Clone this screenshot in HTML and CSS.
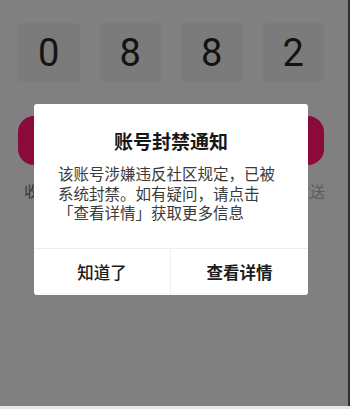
FILE: index.html
```html
<!DOCTYPE html>
<html lang="zh-CN">
<head>
<meta charset="utf-8">
<title>账号封禁通知</title>
<link rel="stylesheet" href="styles.css">
</head>
<body>
<div class="screen">
  <main class="page">
    <div class="code-row">
      <div class="code-box">0</div>
      <div class="code-box">8</div>
      <div class="code-box">8</div>
      <div class="code-box">2</div>
    </div>
    <div class="primary-btn"></div>
    <div class="link-row">
      <span class="link">收不到验证码</span>
      <span class="resend">60秒后重新发送</span>
    </div>

    <div class="dialog" role="dialog">
      <h2 class="dialog-title">账号封禁通知</h2>
      <p class="dialog-body">该账号涉嫌违反社区规定，已被系统封禁。如有疑问，请点击「查看详情」获取更多信息</p>
      <div class="dialog-actions">
        <button class="action action-secondary">知道了</button>
        <button class="action action-primary">查看详情</button>
      </div>
    </div>
  </main>
  <div class="edge-right"></div>
</div>
<div class="edge-bottom"></div>
</body>
</html>
```

FILE: styles.css
```css
* { box-sizing: border-box; }

html, body {
  margin: 0;
  padding: 0;
  width: 350px;
  height: 409px;
  overflow: hidden;
  background: #e6e6e6;
  font-family: "Noto Sans CJK SC", "Noto Sans", sans-serif;
}

.screen {
  display: flex;
  width: 350px;
  height: 406px;
}

.page {
  position: relative;
  width: 348px;
  height: 406px;
  background: #808080;
  padding: 23px 0 0 18px;
}

.edge-right {
  width: 2px;
  height: 406px;
  background: #2f2f2f;
}

.edge-bottom {
  height: 3px;
  background: #e6e6e6;
}

.code-row {
  display: grid;
  grid-template-columns: repeat(4, 61.5px);
  column-gap: 20px;
}

.code-box {
  height: 59px;
  border-radius: 4px;
  background: #7b7b7b;
  display: flex;
  align-items: center;
  justify-content: center;
  font-family: Roboto, "Noto Sans", sans-serif;
  font-size: 38px;
  font-weight: 400;
  color: #131313;
}

.primary-btn {
  margin-top: 34px;
  width: 306px;
  height: 49px;
  border-radius: 16px;
  background: #8a0a3c;
}

.link-row {
  display: flex;
  justify-content: space-between;
  width: 307px;
  margin-top: 16px;
  padding-left: 6px;
  font-size: 15px;
  line-height: 20px;
}

.link { color: #2b3552; }
.resend { color: #5c5c5c; }

.dialog {
  position: absolute;
  left: 34px;
  top: 104px;
  width: 274px;
  height: 191px;
  background: #ffffff;
  border-radius: 3px;
  display: flex;
  flex-direction: column;
}

.dialog-title {
  margin: 24px 0 0;
  font-size: 19px;
  line-height: 26px;
  font-weight: 700;
  color: #161616;
  text-align: center;
}

.dialog-body {
  margin: 10px 0 0;
  padding: 0 24px;
  font-size: 15.5px;
  line-height: 19.5px;
  color: #3a3a3a;
  flex: 1;
}

.dialog-actions {
  display: grid;
  grid-template-columns: 137px 1fr;
  height: 47px;
  border-top: 1px solid #eeeeee;
}

.action {
  border: 0;
  background: transparent;
  margin: 0;
  padding: 0;
  font-family: "Noto Sans CJK SC", "Noto Sans", sans-serif;
  font-size: 16.5px;
  color: #1c1c1c;
}

.action-secondary {
  font-weight: 500;
  border-right: 1px solid #eeeeee;
}

.action-primary {
  font-weight: 700;
}
```
